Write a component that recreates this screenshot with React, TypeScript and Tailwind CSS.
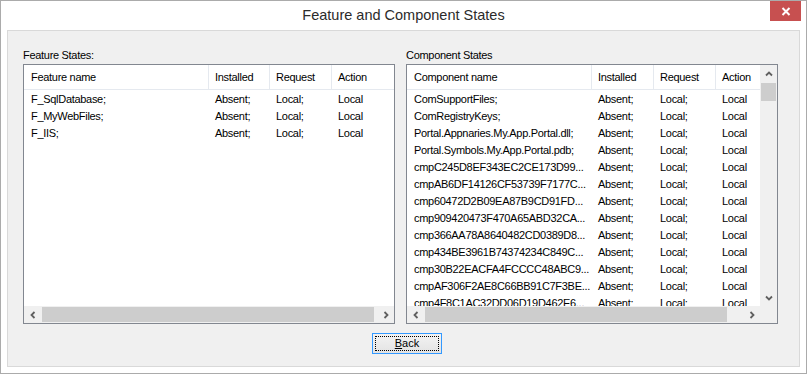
import React from "react";

type Col = { title: string; w: number; pl: number };

const featureCols: Col[] = [
  { title: "Feature name", w: 185, pl: 7 },
  { title: "Installed", w: 61, pl: 6 },
  { title: "Request", w: 62, pl: 6 },
  { title: "Action", w: 62, pl: 6 },
];

const componentCols: Col[] = [
  { title: "Component name", w: 185, pl: 7 },
  { title: "Installed", w: 62, pl: 6 },
  { title: "Request", w: 62, pl: 6 },
  { title: "Action", w: 44, pl: 6 },
];

const features = ["F_SqlDatabase;", "F_MyWebFiles;", "F_IIS;"];

const components = [
  "ComSupportFiles;",
  "ComRegistryKeys;",
  "Portal.Appnaries.My.App.Portal.dll;",
  "Portal.Symbols.My.App.Portal.pdb;",
  "cmpC245D8EF343EC2CE173D99...",
  "cmpAB6DF14126CF53739F7177C...",
  "cmp60472D2B09EA87B9CD91FD...",
  "cmp909420473F470A65ABD32CA...",
  "cmp366AA78A8640482CD0389D8...",
  "cmp434BE3961B74374234C849C...",
  "cmp30B22EACFA4FCCCC48ABC9...",
  "cmpAF306F2AE8C66BB91C7F3BE...",
  "cmp4F8C1AC32DD06D19D462E6...",
];

function Chevron({ dir }: { dir: "left" | "right" | "up" | "down" }) {
  const pts = {
    left: "5.5,1 2.5,4 5.5,7",
    right: "2.5,1 5.5,4 2.5,7",
    up: "1,5.5 4,2.5 7,5.5",
    down: "1,2.5 4,5.5 7,2.5",
  }[dir];
  return (
    <svg width="8" height="8" viewBox="0 0 8 8">
      <polyline points={pts} fill="none" stroke="#606060" strokeWidth="1.8" />
    </svg>
  );
}

function HScroll({ thumb }: { thumb: number }) {
  return (
    <div className="flex h-[17px] bg-[#f0f0f0]">
      <div className="w-[17px] flex items-center justify-center">
        <Chevron dir="left" />
      </div>
      <div className="flex-1 flex py-[1px]">
        <div className="ml-[1px] bg-[#cdcdcd]" style={{ width: thumb }} />
      </div>
      <div className="w-[17px] flex items-center justify-center">
        <Chevron dir="right" />
      </div>
    </div>
  );
}

function VScroll() {
  return (
    <div className="w-[17px] flex flex-col bg-[#f0f0f0]">
      <div className="h-[17px] flex items-center justify-center">
        <Chevron dir="up" />
      </div>
      <div className="flex-1 px-[1px]">
        <div className="mt-[1px] h-[18px] bg-[#cdcdcd]" />
      </div>
      <div className="h-[17px] flex items-center justify-center">
        <Chevron dir="down" />
      </div>
    </div>
  );
}

function Table({ cols, names }: { cols: Col[]; names: string[] }) {
  return (
    <div className="flex-1 flex flex-col overflow-hidden bg-white">
      <div className="flex h-[25px] border-b border-[#e5e9ef]">
        {cols.map((c, i) => (
          <div
            key={c.title}
            className={`shrink-0 flex items-center pt-[1px] whitespace-nowrap overflow-hidden ${i < cols.length - 1 ? "border-r border-[#e5e9ef]" : ""}`}
            style={{ width: c.w, paddingLeft: c.pl }}
          >
            {c.title}
          </div>
        ))}
      </div>
      <div className="flex-1 overflow-hidden pt-[1px]">
        {names.map((n) => (
          <div key={n} className="flex h-[17px] items-center">
            {[n, "Absent;", "Local;", "Local"].map((t, i) => (
              <div
                key={i}
                className="shrink-0 whitespace-nowrap overflow-hidden"
                style={{ width: cols[i].w, paddingLeft: cols[i].pl }}
              >
                {t}
              </div>
            ))}
          </div>
        ))}
      </div>
    </div>
  );
}

export default function App() {
  return (
    <div className="w-[807px] h-[374px] bg-white border border-[#ababab] flex flex-col font-['Liberation_Sans',Arial,sans-serif] text-black">
      <div className="relative h-[29px] flex items-center justify-center">
        <span className="text-[14.5px] text-[#2b2b2b] mt-[1px]">Feature and Component States</span>
        <div className="absolute right-[5px] top-0 w-[31px] h-[20px] bg-[#c75050] flex items-center justify-center">
          <svg width="10" height="9" viewBox="0 0 10 9">
            <path d="M1.5 1 L8.5 8 M8.5 1 L1.5 8" stroke="white" strokeWidth="2" />
          </svg>
        </div>
      </div>
      <div className="flex-1 mx-[6px] mb-[6px] border border-[#d9d9d9] bg-[#f0f0f0] pt-[18px] pl-[15px] flex flex-col text-[11px] tracking-[-0.3px]">
        <div className="flex gap-[11px]">
          <div className="w-[372px] flex flex-col">
            <div className="h-[13px] leading-[13px] mb-[2px]">Feature States:</div>
            <div className="h-[260px] border border-[#828790] flex flex-col">
              <div className="h-[241px] flex">
                <Table cols={featureCols} names={features} />
              </div>
              <HScroll thumb={332} />
            </div>
          </div>
          <div className="w-[372px] flex flex-col">
            <div className="h-[13px] leading-[13px] mb-[2px]">Component States</div>
            <div className="h-[260px] border border-[#828790] flex flex-col">
              <div className="h-[241px] flex">
                <Table cols={componentCols} names={components} />
                <VScroll />
              </div>
              <div className="flex">
                <div className="flex-1">
                  <HScroll thumb={302} />
                </div>
                <div className="w-[17px] h-[17px] bg-[#f0f0f0]" />
              </div>
            </div>
          </div>
        </div>
        <div className="pl-[349px] mt-[9px]">
          <button className="w-[70px] h-[21px] border border-[#3399ff] bg-linear-to-b from-[#f3f3f3] to-[#e3e3e3] p-[2px] tracking-normal">
            <div className="w-full h-full border border-dotted border-black flex items-center justify-center leading-none">
              <span>
                <span className="underline">B</span>ack
              </span>
            </div>
          </button>
        </div>
      </div>
    </div>
  );
}
